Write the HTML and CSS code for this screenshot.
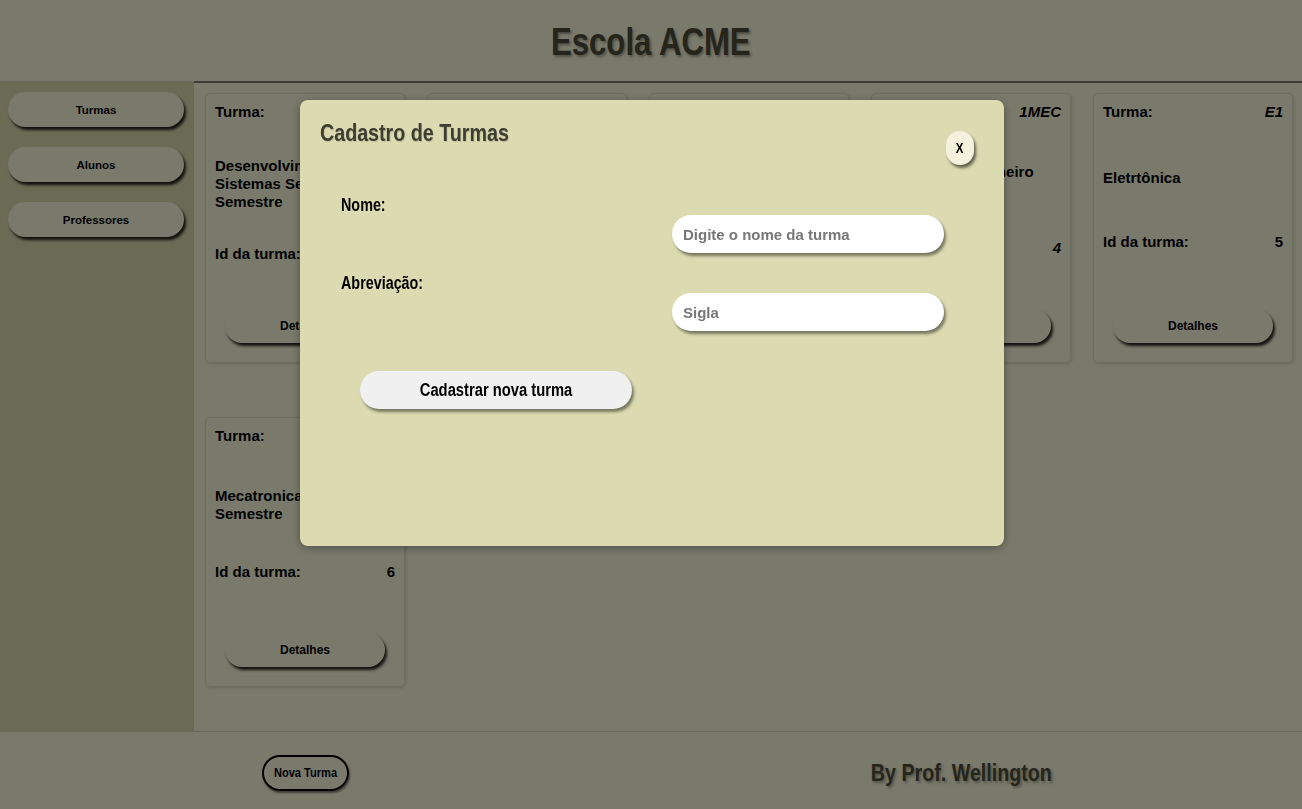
FILE: index.html
```html
<!DOCTYPE html>
<html lang="pt-BR">
<head>
<meta charset="utf-8">
<title>Escola ACME</title>
<link rel="stylesheet" href="styles.css">
</head>
<body>
<div class="app">
  <header class="top">
    <h1 class="brand"><span class="narrow">Escola ACME</span></h1>
  </header>
  <div class="middle">
    <nav class="sidebar">
      <button class="side-btn">Turmas</button>
      <button class="side-btn">Alunos</button>
      <button class="side-btn">Professores</button>
    </nav>
    <main class="cards">
      <div class="card">
        <div class="row"><span>Turma:</span><em>2DS</em></div>
        <p class="name">Desenvolvimento de Sistemas Segundo Semestre</p>
        <div class="row"><span>Id da turma:</span><span>1</span></div>
        <button class="details">Detalhes</button>
      </div>
      <div class="card">
        <div class="row"><span>Turma:</span><em>1DS</em></div>
        <p class="name">Desenvolvimento de Sistemas Primeiro Semestre</p>
        <div class="row"><span>Id da turma:</span><span>2</span></div>
        <button class="details">Detalhes</button>
      </div>
      <div class="card">
        <div class="row"><span>Turma:</span><em>3DS</em></div>
        <p class="name">Desenvolvimento de Sistemas Terceiro Semestre</p>
        <div class="row"><span>Id da turma:</span><span>3</span></div>
        <button class="details">Detalhes</button>
      </div>
      <div class="card">
        <div class="row"><span>Turma:</span><em>1MEC</em></div>
        <p class="name">Mecatrônica Primeiro Semestre</p>
        <div class="row"><span>Id da turma:</span><em>4</em></div>
        <button class="details">Detalhes</button>
      </div>
      <div class="card">
        <div class="row"><span>Turma:</span><em>E1</em></div>
        <p class="name">Eletrtônica</p>
        <div class="row"><span>Id da turma:</span><span>5</span></div>
        <button class="details">Detalhes</button>
      </div>
      <div class="card">
        <div class="row"><span>Turma:</span><em>2MEC</em></div>
        <p class="name">Mecatronica Segundo Semestre</p>
        <div class="row"><span>Id da turma:</span><span>6</span></div>
        <button class="details">Detalhes</button>
      </div>
    </main>
  </div>
  <footer class="bottom">
    <button class="new-btn"><span class="narrow">Nova Turma</span></button>
    <span class="credit"><span class="narrow narrow-right">By Prof. Wellington</span></span>
  </footer>
</div>

<div class="overlay">
  <div class="modal">
    <div class="modal-head">
      <h2 class="modal-title"><span class="narrow narrow-left">Cadastro de Turmas</span></h2>
      <button class="close"><span class="narrow">X</span></button>
    </div>
    <form class="modal-form">
      <div class="field">
        <label><span class="narrow narrow-left">Nome:</span></label>
        <input type="text" placeholder="Digite o nome da turma">
      </div>
      <div class="field">
        <label><span class="narrow narrow-left">Abreviação:</span></label>
        <input type="text" placeholder="Sigla">
      </div>
      <button type="button" class="submit"><span class="narrow">Cadastrar nova turma</span></button>
    </form>
  </div>
</div>
</body>
</html>
```
FILE: styles.css
```css
* { box-sizing: border-box; }

html, body {
  margin: 0;
  padding: 0;
}

body {
  font-family: "Liberation Sans", Arial, sans-serif;
  background: #f4f4d8;
  color: #000;
  width: 1302px;
  height: 809px;
  overflow: hidden;
}

button, input {
  font-family: inherit;
}

/* condensed look of the original display face */
.narrow {
  display: inline-block;
  transform: scaleX(0.82);
  white-space: nowrap;
}

.narrow-left {
  transform-origin: left center;
}

.narrow-right {
  transform-origin: right center;
}

.app {
  display: flex;
  flex-direction: column;
  height: 809px;
}

.top {
  height: 81px;
  display: flex;
  align-items: center;
  justify-content: center;
  background: #f4f4d8;
}

.brand {
  margin: 0;
  font-weight: 700;
  font-size: 38px;
  line-height: 44px;
  color: #4a4a38;
  text-shadow: 2px 2px 3px rgba(0, 0, 0, 0.35);
  padding-top: 2px;
}

.middle {
  display: flex;
  height: 650px;
}

.sidebar {
  width: 194px;
  flex: none;
  background: #d6d6aa;
  padding: 11px 0 0 8px;
  display: flex;
  flex-direction: column;
  gap: 20px;
}

.side-btn {
  width: 176px;
  height: 35px;
  border: none;
  border-radius: 18px;
  background: #f4f4d8;
  box-shadow: 2px 3px 3px rgba(0, 0, 0, 0.85);
  font-size: 11.5px;
  font-weight: 700;
  color: #000;
}

.cards {
  flex: 1;
  border-top: 2px solid #7a7a66;
  padding: 10px 0 0 11px;
  display: flex;
  flex-wrap: wrap;
  align-content: flex-start;
  gap: 54px 22px;
}

.card {
  width: 200px;
  height: 270px;
  border: 1px solid #dcdcc0;
  border-radius: 5px;
  box-shadow: 1px 1px 3px rgba(0, 0, 0, 0.15);
  padding: 9px 9px 19px;
  display: flex;
  flex-direction: column;
  justify-content: space-between;
  font-size: 15px;
  font-weight: 700;
  line-height: 18px;
}

.row {
  display: flex;
  justify-content: space-between;
}

.row em {
  font-style: italic;
}

.name {
  margin: 2px 0 0;
}

.details {
  align-self: center;
  margin-top: 12px;
  width: 160px;
  height: 34px;
  flex: none;
  border: none;
  border-radius: 17px;
  background: #f4f4d8;
  box-shadow: 2px 3px 3px rgba(0, 0, 0, 0.85);
  font-size: 12px;
  font-weight: 700;
  color: #000;
}

.bottom {
  height: 78px;
  border-top: 1px solid #d2d2ae;
  background: #f4f4d8;
  display: flex;
  align-items: center;
  justify-content: space-between;
  padding: 4px 250px 0 262px;
}

.new-btn {
  width: 87px;
  height: 36px;
  border: 2px solid #000;
  border-radius: 18px;
  background: transparent;
  box-shadow: 1px 2px 2px rgba(0, 0, 0, 0.5);
  font-size: 13.5px;
  font-weight: 700;
  color: #000;
  padding: 0;
}

.credit {
  font-size: 24px;
  font-weight: 700;
  color: #4a4a38;
  text-shadow: 2px 2px 3px rgba(0, 0, 0, 0.35);
}

/* modal */
.overlay {
  position: fixed;
  inset: 0;
  background: rgba(0, 0, 0, 0.5);
  display: flex;
  justify-content: center;
  align-items: flex-start;
  padding: 100px 0 0 2px;
}

.modal {
  width: 704px;
  height: 446px;
  background: #dbdab0;
  border-radius: 8px;
  box-shadow: 0 2px 8px rgba(0, 0, 0, 0.35);
  padding: 19px 30px 0 20px;
}

.modal-head {
  display: flex;
  justify-content: space-between;
  align-items: flex-start;
}

.modal-title {
  margin: 0;
  font-size: 24px;
  font-weight: 700;
  line-height: 28px;
  color: #3d3d32;
  text-shadow: 1px 1px 1px rgba(0, 0, 0, 0.15);
}

.close {
  margin-top: 12px;
  width: 28px;
  height: 34px;
  border: none;
  border-radius: 14px;
  background: #f4f1dc;
  box-shadow: 2px 3px 3px rgba(0, 0, 0, 0.55);
  font-size: 14px;
  font-weight: 700;
  color: #000;
  padding: 0;
}

.modal-form {
  margin-top: 30px;
  padding-left: 21px;
  display: flex;
  flex-direction: column;
  gap: 20px;
}

.field {
  display: flex;
  flex-direction: column;
}

.field label {
  font-size: 17.5px;
  font-weight: 700;
  line-height: 20px;
  color: #000;
}

.field input {
  align-self: flex-end;
  margin-right: 30px;
  width: 272px;
  height: 38px;
  border: none;
  border-radius: 19px;
  background: #fff;
  box-shadow: 2px 3px 3px rgba(0, 0, 0, 0.45);
  padding: 0 11px;
  font-size: 15px;
  font-weight: 700;
  color: #333;
  outline: none;
}

.field input::placeholder {
  color: #777;
}

.submit {
  align-self: flex-start;
  margin: 20px 0 0 19px;
  width: 272px;
  height: 38px;
  border: none;
  border-radius: 19px;
  background: #f0f0f0;
  box-shadow: 2px 3px 3px rgba(0, 0, 0, 0.45);
  font-size: 18px;
  font-weight: 700;
  color: #000;
}
```
